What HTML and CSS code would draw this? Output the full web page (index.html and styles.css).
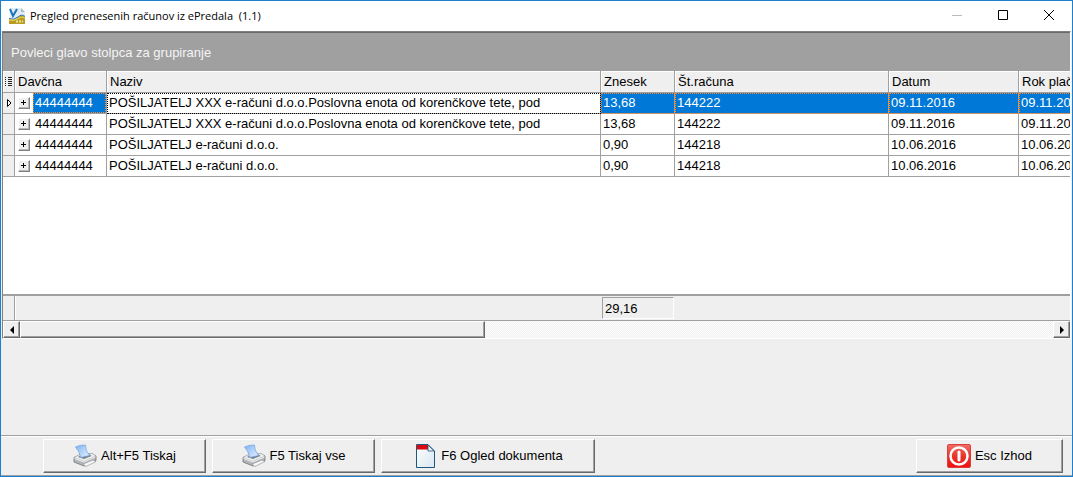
FILE: index.html
```html
<!DOCTYPE html>
<html lang="sl">
<head>
<meta charset="utf-8">
<title>Pregled prenesenih računov iz ePredala (1.1)</title>
<link rel="stylesheet" href="styles.css">
</head>
<body>
<svg class="defs" aria-hidden="true">
  <defs>
    <linearGradient id="paper" x1="0" y1="0" x2="1" y2="1"><stop offset="0" stop-color="#7db2f5"/><stop offset="1" stop-color="#e6f2ff"/></linearGradient>
    <linearGradient id="red" x1="0" y1="0" x2="0" y2="1"><stop offset="0" stop-color="#f0706a"/><stop offset=".5" stop-color="#e8352c"/><stop offset="1" stop-color="#f01010"/></linearGradient>
    <linearGradient id="sheet" x1="0" y1="0" x2="1" y2="1"><stop offset="0" stop-color="#ffffff"/><stop offset="1" stop-color="#d8e6f0"/></linearGradient>
    <symbol id="printer" viewBox="0 0 24 24">
      <path d="M1 13.500 7 10.500 19 9.500 23 12V16.500L11 22 1 18Z" fill="#b2b5b9" stroke="#6f7378" stroke-width=".8"/>
      <path d="M1.500 13.500 7 10.500 19 9.500 22.500 12 11 17Z" fill="#eceef0"/>
      <path d="M5 13 8 11 17 10.500 18.500 12 11 15Z" fill="#7b7f84"/>
      <path d="M2.500 3Q7 .8 12.500 1 12 6 16.500 11.500L7.500 13.500Q7 8 2.500 3Z" fill="url(#paper)" stroke="#6f9fe0" stroke-width=".7"/>
      <path d="M1.500 14.500 11 18 22.500 13" fill="none" stroke="#fff" stroke-width=".8"/>
      <path d="M10 20 20 16 23 17.500 13 22.500Z" fill="#f6f7f8" stroke="#888c91" stroke-width=".6"/>
    </symbol>
  </defs>
</svg>
<main class="window">
  <header class="titlebar">
    <svg class="app-icon" viewBox="0 0 16 16" aria-hidden="true">
      <path d="M1 0H12L16 4V11H1Z" fill="#e3ecf2"/>
      <path d="M12 0V4H16Z" fill="#a9bdc9"/>
      <path d="M0 11Q5 13 9 9.500T16 9V16H0Z" fill="#b99c22"/>
      <path d="M0 10.500Q5 12.500 9 9T16 8.500" fill="none" stroke="#2c6fb0"/>
      <path d="M0 12Q5 13.500 9 10.500T16 10" fill="none" stroke="#ecd94a"/>
      <path d="M1 1 4 8 8 1" fill="none" stroke="#1676bd" stroke-width="2"/>
      <path d="M7 13.500H14" stroke="#efe3a0" stroke-width="2" stroke-dasharray="2 1"/>
    </svg>
    <h1 class="title">Pregled prenesenih računov iz ePredala&nbsp; (1.1)</h1>
    <button class="caption" type="button" aria-label="Pomanjšaj" disabled><svg viewBox="0 0 12 12"><path d="M1 5.500H11" stroke="#bbb"/></svg></button>
    <button class="caption" type="button" aria-label="Povečaj"><svg viewBox="0 0 12 12"><path d="M1.500 .5H10.500V9.500H1.500Z" fill="none" stroke="#000"/></svg></button>
    <button class="caption" type="button" aria-label="Zapri"><svg viewBox="0 0 12 12"><path d="M1 0 11 10M11 0 1 10" stroke="#000"/></svg></button>
  </header>

  <section class="grid">
    <div class="group-panel">Povleci glavo stolpca za grupiranje</div>
    <div class="viewport">
      <table class="data">
        <colgroup><col class="c-mark"><col class="c-tax"><col class="c-name"><col class="c-amount"><col class="c-number"><col class="c-date"><col class="c-due"></colgroup>
        <thead>
          <tr>
            <th class="mark"><svg viewBox="0 0 8 12" aria-hidden="true"><path d="M0 1.500H1M3 1.500H7M0 3.500H1M3 3.500H7M0 5.500H1M3 5.500H7M0 7.500H1M3 7.500H7M0 9.500H1M3 9.500H7" stroke="#222"/></svg></th>
            <th>Davčna</th><th>Naziv</th><th>Znesek</th><th>Št.računa</th><th>Datum</th><th>Rok plačila</th>
          </tr>
        </thead>
        <tbody>
          <tr class="selected">
            <td class="mark"><svg viewBox="0 0 8 12" aria-hidden="true"><path d="M2.500 2.500V9.500L6 6Z" fill="#fff" stroke="#000"/></svg></td>
            <td class="tax"><button class="expand" type="button" aria-label="Razširi"></button><span>44444444</span></td>
            <td class="focused">POŠILJATELJ XXX e-računi d.o.o.Poslovna enota od korenčkove tete, pod</td><td>13,68</td><td>144222</td><td>09.11.2016</td><td>09.11.2016</td>
          </tr>
          <tr>
            <td class="mark"></td>
            <td class="tax"><button class="expand" type="button" aria-label="Razširi"></button><span>44444444</span></td>
            <td>POŠILJATELJ XXX e-računi d.o.o.Poslovna enota od korenčkove tete, pod</td><td>13,68</td><td>144222</td><td>09.11.2016</td><td>09.11.2016</td>
          </tr>
          <tr>
            <td class="mark"></td>
            <td class="tax"><button class="expand" type="button" aria-label="Razširi"></button><span>44444444</span></td>
            <td>POŠILJATELJ e-računi d.o.o.</td><td>0,90</td><td>144218</td><td>10.06.2016</td><td>10.06.2016</td>
          </tr>
          <tr>
            <td class="mark"></td>
            <td class="tax"><button class="expand" type="button" aria-label="Razširi"></button><span>44444444</span></td>
            <td>POŠILJATELJ e-računi d.o.o.</td><td>0,90</td><td>144218</td><td>10.06.2016</td><td>10.06.2016</td>
          </tr>
        </tbody>
      </table>
    </div>
    <div class="summary"><span class="summary-mark"></span><span class="total">29,16</span></div>
    <div class="scrollbar">
      <button class="arrow" type="button" aria-label="Levo"><svg viewBox="0 0 8 8"><path d="M6 0V8L2 4Z"/></svg></button>
      <div class="track"><div class="thumb"></div></div>
      <button class="arrow" type="button" aria-label="Desno"><svg viewBox="0 0 8 8"><path d="M2 0V8L6 4Z"/></svg></button>
    </div>
  </section>

  <section class="details"></section>

  <footer class="actions">
    <button class="action" type="button"><svg class="icon" aria-hidden="true"><use href="#printer"/></svg>Alt+F5 Tiskaj</button>
    <button class="action" type="button"><svg class="icon" aria-hidden="true"><use href="#printer"/></svg>F5 Tiskaj vse</button>
    <button class="action wide" type="button"><svg class="icon" viewBox="0 0 24 24" aria-hidden="true"><path d="M3.500 .5H15L21.500 7V23.500H3.500Z" fill="url(#sheet)" stroke="#1d587d"/><path d="M4 1H15L18 5.500H4Z" fill="#dc0710"/><path d="M15 1V7H21Z" fill="#eaf3f8" stroke="#1d587d" stroke-width=".8"/></svg>F6 Ogled dokumenta</button>
    <button class="action exit" type="button"><svg class="icon" viewBox="0 0 24 24" aria-hidden="true"><rect x=".5" y=".5" width="23" height="23" rx="1.500" fill="url(#red)" stroke="#d9403a"/><circle cx="12" cy="12" r="8.500" fill="none" stroke="#fff" stroke-width="2.500"/><path d="M12 8V16" stroke="#fff" stroke-width="3" stroke-linecap="round"/></svg>Esc Izhod</button>
  </footer>
</main>
</body>
</html>
```
FILE: styles.css
```css
* { box-sizing: border-box; }
body {
  margin: 0;
  background: #efefef;
  color: #000;
  font: 13px/16px "Liberation Sans", Arial, sans-serif;
}
button { font: inherit; color: inherit; padding: 0; }
.defs { display: block; width: 0; height: 0; }
.window {
  display: flex;
  flex-direction: column;
  min-height: 100vh;
  border: 1px solid #1c7fd0;
}
.titlebar {
  display: flex;
  align-items: center;
  height: 30px;
  padding-left: 8px;
  background: #fff;
}
.app-icon { width: 16px; height: 16px; }
.title {
  flex: 1;
  margin: 0 0 0 5px;
  font: 11px/16px "Open Sans", "Noto Sans", sans-serif;
}
.caption {
  display: flex;
  align-items: center;
  justify-content: center;
  width: 46px;
  height: 28px;
  border: 0;
  background: none;
}
.caption svg { width: 12px; height: 12px; }

.grid {
  display: flex;
  flex-direction: column;
  flex: 1;
  margin: 0 1px;
  border: solid;
  border-width: 1px;
  border-color: #808080 #fff #fff #808080;
}
.group-panel {
  height: 39px;
  padding: 12px 8px 0;
  border-top: 1px solid #696969;
  background: #a0a0a0;
  color: #f4f4f4;
}
.viewport {
  flex: 1;
  overflow: hidden;
  background: #fff;
}
.data {
  width: 1096px;
  table-layout: fixed;
  border-collapse: separate;
  border-spacing: 0;
}
.c-mark { width: 12px; }
.c-tax { width: 92px; }
.c-name { width: 494px; }
.c-amount { width: 74px; }
.c-number { width: 214px; }
.c-date { width: 130px; }
.c-due { width: 80px; }
.data th, .data td {
  height: 21px;
  padding: 0 2px;
  border-right: 1px solid #a0a0a0;
  border-bottom: 1px solid #a0a0a0;
  font-weight: normal;
  text-align: left;
  white-space: nowrap;
}
.data th {
  height: 22px;
  padding: 0 3px;
  background: #efefef;
  box-shadow: inset 1px 1px #fff;
}
.data .mark { padding: 0 2px; background: #efefef; }
.mark svg { display: block; width: 8px; height: 12px; }
.data .tax { padding: 0; }
.tax span {
  display: inline-block;
  width: 73px;
  padding: 2px;
  vertical-align: middle;
}
.expand {
  width: 12px;
  height: 12px;
  margin: 0 3px;
  border: 1px solid;
  border-color: #fff #808080 #808080 #fff;
  background:
    linear-gradient(#000, #000) 2px 4px / 5px 1px no-repeat,
    linear-gradient(#000, #000) 4px 2px / 1px 5px no-repeat,
    #efefef;
  box-shadow: inset -1px -1px #b8b8b8;
  vertical-align: middle;
}
.selected td:not(.mark):not(.tax):not(.focused), .selected .tax span {
  background: #0078d7;
  color: #fff;
  outline: 1px dotted #ff8728;
  outline-offset: -1px;
}
.data .focused { outline: 1px dotted #000; outline-offset: -1px; }

.summary {
  display: flex;
  height: 27px;
  border-top: 2px solid #a0a0a0;
  border-bottom: 1px solid #a0a0a0;
}
.summary-mark {
  width: 12px;
  margin-right: 587px;
  border-right: 1px solid #a0a0a0;
  box-shadow: 1px 0 #fff;
}
.total {
  width: 72px;
  height: 22px;
  margin-top: 1px;
  padding: 3px 2px;
  border: 1px solid;
  border-color: #a0a0a0 #fff #fff #a0a0a0;
}
.scrollbar { display: flex; height: 17px; }
.arrow, .thumb {
  border: 1px solid;
  border-color: #fff #696969 #696969 #fff;
  background: #efefef;
  box-shadow: inset -1px -1px #a0a0a0;
}
.arrow {
  display: flex;
  align-items: center;
  justify-content: center;
  width: 17px;
}
.arrow svg { width: 8px; height: 8px; }
.track {
  flex: 1;
  background: repeating-conic-gradient(#fff 0 25%, #efefef 0 50%) 0 0 / 2px 2px;
}
.thumb { width: 45%; height: 17px; }

.details { height: 96px; }
.actions {
  display: flex;
  gap: 6px;
  height: 41px;
  padding: 3px 9px 3px 42px;
  border-top: 1px solid #a0a0a0;
  border-bottom: 1px solid #a0a0a0;
  box-shadow: inset 0 1px #fff;
}
.action {
  display: flex;
  align-items: center;
  justify-content: center;
  gap: 4px;
  width: 163px;
  height: 34px;
  border: 1px solid;
  border-color: #fff #696969 #696969 #fff;
  background: #efefef;
  box-shadow: inset -1px -1px #a0a0a0;
}
.action.wide { width: 214px; }
.action.exit { width: 147px; margin-left: auto; }
.icon { width: 24px; height: 24px; }
```
